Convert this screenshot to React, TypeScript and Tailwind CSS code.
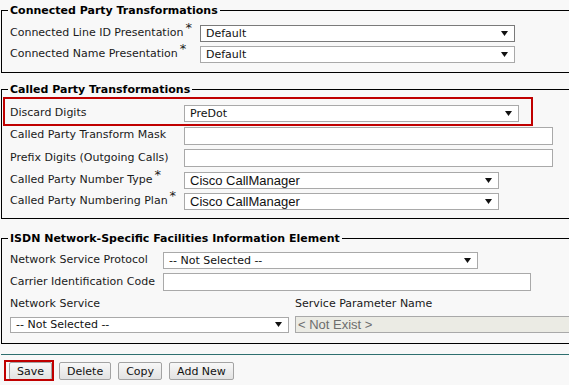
import React from "react";

const Arrow = () => (
  <svg width="7" height="5" viewBox="0 0 7 5" className="shrink-0">
    <path d="M0 0H7L3.5 5Z" fill="#111" />
  </svg>
);

function Select({
  value,
  className,
  valueClass = "font-['DejaVu_Sans',sans-serif] text-[11px]",
}: {
  value: string;
  className: string;
  valueClass?: string;
}) {
  return (
    <div
      className={`flex items-center justify-between bg-white border pl-[5px] pr-[6px] ${className}`}
    >
      <span className={`text-[#111] leading-none whitespace-nowrap ${valueClass}`}>{value}</span>
      <Arrow />
    </div>
  );
}

function Input({ className }: { className: string }) {
  return <div className={`bg-white border border-[#a9a9a9] ${className}`} />;
}

const Star = () => (
  <span className="text-[13px] leading-[0] align-[4px] ml-[2px] font-['DejaVu_Sans',sans-serif]">*</span>
);

function Legend({ children }: { children: React.ReactNode }) {
  return (
    <legend className="font-bold text-[11px] leading-[13px] px-[2px] -ml-[2px] text-black">
      {children}
    </legend>
  );
}

export default function App() {
  return (
    <div className="relative w-[569px] h-[385px] overflow-hidden bg-[#f8f8f8] text-[11px] text-[#1a1a1a] font-['DejaVu_Sans',sans-serif]">
      <div className="w-[700px] pl-[1px] pt-[4px]">
        {/* Connected Party Transformations */}
        <fieldset className="border border-black pl-[8px] pt-[6px] pb-[7px]">
          <Legend>Connected Party Transformations</Legend>
          <div className="flex items-center h-[21px]">
            <div className="w-[190px] whitespace-nowrap">
              Connected Line ID Presentation
              <Star />
            </div>
            <Select value="Default" className="w-[315px] h-[17px] border-[#7a7a7a]" />
          </div>
          <div className="flex items-center h-[21px]">
            <div className="w-[190px] whitespace-nowrap">
              Connected Name Presentation
              <Star />
            </div>
            <Select value="Default" className="w-[315px] h-[17px] border-[#a9a9a9]" />
          </div>
        </fieldset>

        {/* Called Party Transformations */}
        <fieldset className="mt-[10px] border border-black pl-[8px] pt-[6px] pb-[7px]">
          <Legend>Called Party Transformations</Legend>
          <div className="flex items-center h-[22px]">
            <div className="w-[174px] whitespace-nowrap">Discard Digits</div>
            <Select value="PreDot" className="w-[335px] h-[17px] border-[#a9a9a9]" />
          </div>
          <div className="flex items-center h-[23px]">
            <div className="w-[174px] whitespace-nowrap">Called Party Transform Mask</div>
            <Input className="w-[369px] h-[18px]" />
          </div>
          <div className="flex items-center h-[22px]">
            <div className="w-[174px] whitespace-nowrap">Prefix Digits (Outgoing Calls)</div>
            <Input className="w-[369px] h-[18px]" />
          </div>
          <div className="flex items-center h-[22px]">
            <div className="w-[174px] whitespace-nowrap">
              Called Party Number Type
              <Star />
            </div>
            <Select
              value="Cisco CallManager"
              className="w-[315px] h-[17px] border-[#a9a9a9]"
              valueClass="font-['Liberation_Sans',Arial,sans-serif] text-[13px]"
            />
          </div>
          <div className="flex items-center h-[20px]">
            <div className="w-[174px] whitespace-nowrap">
              Called Party Numbering Plan
              <Star />
            </div>
            <Select
              value="Cisco CallManager"
              className="w-[315px] h-[17px] border-[#a9a9a9]"
              valueClass="font-['Liberation_Sans',Arial,sans-serif] text-[13px]"
            />
          </div>
        </fieldset>

        {/* ISDN */}
        <fieldset className="mt-[13px] border border-black pl-[8px] pt-[4px] pb-[10px]">
          <Legend>ISDN Network-Specific Facilities Information Element</Legend>
          <div className="flex items-center h-[22px]">
            <div className="w-[153px] whitespace-nowrap">Network Service Protocol</div>
            <Select value="-- Not Selected --" className="w-[315px] h-[17px] border-[#a9a9a9]" />
          </div>
          <div className="flex items-center h-[22px]">
            <div className="w-[153px] whitespace-nowrap">Carrier Identification Code</div>
            <Input className="w-[368px] h-[18px]" />
          </div>
          <div className="flex items-center h-[23px]">
            <div className="w-[285px] whitespace-nowrap">Network Service</div>
            <div className="whitespace-nowrap">Service Parameter Name</div>
          </div>
          <div className="flex items-center h-[17px] gap-[6px]">
            <Select value="-- Not Selected --" className="w-[279px] h-[16px] border-[#a9a9a9]" />
            <div className="flex items-center w-[320px] h-[17px] bg-[#ebebe4] border border-[#a9a9a9] pl-[2px]">
              <span className="font-['Liberation_Sans',Arial,sans-serif] text-[13px] leading-none text-[#6d6d6d]">
                &lt; Not Exist &gt;
              </span>
            </div>
          </div>
        </fieldset>

        <div className="mt-[10px] h-[1px] bg-[#2e6f6f]" />

        <div className="flex gap-[7px] pl-[8px] pt-[7px]">
          {["Save", "Delete", "Copy", "Add New"].map((b) => (
            <div
              key={b}
              className="h-[18px] px-[7px] flex items-center border border-[#a3a3a3] rounded-[2px] bg-gradient-to-b from-[#f8f8f8] to-[#e2e2e2] text-[11px] text-[#111] leading-none"
            >
              {b}
            </div>
          ))}
        </div>
      </div>

      {/* annotation boxes */}
      <div className="absolute left-[3px] top-[97px] w-[530px] h-[29px] border-2 border-[#c00000] pointer-events-none" />
      <div className="absolute left-[4px] top-[360px] w-[50px] h-[21px] border-2 border-[#c00000] pointer-events-none" />
    </div>
  );
}
